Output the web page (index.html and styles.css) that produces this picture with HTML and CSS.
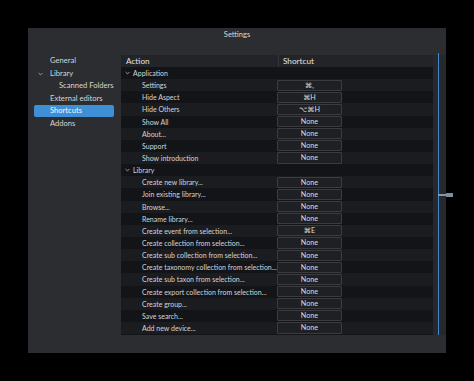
FILE: index.html
```html
<!DOCTYPE html>
<html>
<head>
<meta charset="utf-8">
<link rel="stylesheet" href="styles.css">
</head>
<body>
<div class="window">
  <div class="titlebar">Settings</div>
  <div class="content">
    <div class="sidebar">
      <div class="nav">General</div>
      <div class="nav"><svg class="nav-chev" width="5" height="4" viewBox="0 0 5 4"><path d="M0.6 1 L2.5 2.9 L4.4 1" fill="none" stroke="#b8b9bb" stroke-width="0.8"/></svg>Library</div>
      <div class="nav sub">Scanned Folders</div>
      <div class="nav">External editors</div>
      <div class="nav selected">Shortcuts</div>
      <div class="nav">Addons</div>
    </div>
    <div class="tablewrap">
      <div class="table">
        <div class="thead">
          <div class="th th-action">Action</div>
          <div class="th th-shortcut">Shortcut</div>
        </div>
        <div class="row group"><div class="cell-action"><svg class="chev" width="5" height="4" viewBox="0 0 5 4"><path d="M0.6 1 L2.5 2.9 L4.4 1" fill="none" stroke="#b8b9bb" stroke-width="0.8"/></svg>Application</div></div>
        <div class="row"><div class="cell-action">Settings</div><div class="cell-sc"><span class="key">⌘,</span></div></div>
        <div class="row"><div class="cell-action">Hide Aspect</div><div class="cell-sc"><span class="key">⌘H</span></div></div>
        <div class="row"><div class="cell-action">Hide Others</div><div class="cell-sc"><span class="key">⌥⌘H</span></div></div>
        <div class="row"><div class="cell-action">Show All</div><div class="cell-sc"><span class="key">None</span></div></div>
        <div class="row"><div class="cell-action">About...</div><div class="cell-sc"><span class="key">None</span></div></div>
        <div class="row"><div class="cell-action">Support</div><div class="cell-sc"><span class="key">None</span></div></div>
        <div class="row"><div class="cell-action">Show introduction</div><div class="cell-sc"><span class="key">None</span></div></div>
        <div class="row group"><div class="cell-action"><svg class="chev" width="5" height="4" viewBox="0 0 5 4"><path d="M0.6 1 L2.5 2.9 L4.4 1" fill="none" stroke="#b8b9bb" stroke-width="0.8"/></svg>Library</div></div>
        <div class="row"><div class="cell-action">Create new library...</div><div class="cell-sc"><span class="key">None</span></div></div>
        <div class="row"><div class="cell-action">Join existing library...</div><div class="cell-sc"><span class="key">None</span></div></div>
        <div class="row"><div class="cell-action">Browse...</div><div class="cell-sc"><span class="key">None</span></div></div>
        <div class="row"><div class="cell-action">Rename library...</div><div class="cell-sc"><span class="key">None</span></div></div>
        <div class="row"><div class="cell-action">Create event from selection...</div><div class="cell-sc"><span class="key">⌘E</span></div></div>
        <div class="row"><div class="cell-action">Create collection from selection...</div><div class="cell-sc"><span class="key">None</span></div></div>
        <div class="row"><div class="cell-action">Create sub collection from selection...</div><div class="cell-sc"><span class="key">None</span></div></div>
        <div class="row"><div class="cell-action">Create taxonomy collection from selection...</div><div class="cell-sc"><span class="key">None</span></div></div>
        <div class="row"><div class="cell-action">Create sub taxon from selection...</div><div class="cell-sc"><span class="key">None</span></div></div>
        <div class="row"><div class="cell-action">Create export collection from selection...</div><div class="cell-sc"><span class="key">None</span></div></div>
        <div class="row"><div class="cell-action">Create group...</div><div class="cell-sc"><span class="key">None</span></div></div>
        <div class="row"><div class="cell-action">Save search...</div><div class="cell-sc"><span class="key">None</span></div></div>
        <div class="row"><div class="cell-action">Add new device...</div><div class="cell-sc"><span class="key">None</span></div></div>
      </div>
      <div class="scrollcol"><div class="scrollline"></div></div>
    </div>
  </div>
  <div class="handle"><div class="handle-stem"></div><div class="handle-knob"></div></div>
</div>
</body>
</html>
```

FILE: styles.css
```css
html, body {
  margin: 0;
  padding: 0;
  background: #000;
}
body {
  width: 474px;
  height: 381px;
  overflow: hidden;
  font-family: Lato, "Noto Sans", "DejaVu Sans", sans-serif;
  color: #d6d7d9;
}
.window {
  position: relative;
  margin: 28px 0 0 28px;
  width: 418px;
  height: 325px;
  background: #2b2d30;
  display: flex;
  flex-direction: column;
}
.titlebar {
  height: 14px;
  line-height: 14px;
  text-align: center;
  font-size: 7.5px;
  color: #d8d9db;
}
.content {
  flex: 1;
  display: flex;
}
.sidebar {
  width: 93px;
  padding-top: 12px;
  display: flex;
  flex-direction: column;
}
.nav {
  position: relative;
  height: 12.7px;
  line-height: 12.7px;
  margin: 0 7px 0 6px;
  padding-left: 16px;
  font-size: 7.6px;
  color: #d4d5d7;
  border-radius: 2px;
}
.nav.sub {
  padding-left: 25px;
}
.nav.selected {
  height: 11.5px;
  line-height: 11.5px;
  margin-top: 0.6px;
  margin-bottom: 0.6px;
  background: #3f8fd6;
  color: #f4f7fb;
}
.nav-chev {
  position: absolute;
  left: 4px;
  top: 5px;
}
.tablewrap {
  display: flex;
  padding-top: 13px;
  padding-bottom: 18px;
}
.table {
  width: 312px;
  background: #131417;
  display: flex;
  flex-direction: column;
}
.thead {
  height: 12px;
  display: flex;
  background: #222427;
  font-size: 8.2px;
  color: #e2e3e5;
}
.th {
  line-height: 12px;
}
.th-action {
  width: 152px;
  padding-left: 5px;
}
.th-shortcut {
  flex: 1;
  padding-left: 4px;
  border-left: 1px solid #34363a;
}
.row {
  height: 12.15px;
  display: flex;
  align-items: center;
  font-size: 7px;
  color: #d4d5d7;
}
.row:nth-child(odd) {
  background: #1b1c1f;
}
.row:nth-child(even) {
  background: #131417;
}
.cell-action {
  width: 135px;
  padding-left: 21px;
  white-space: nowrap;
}
.row.group .cell-action {
  padding-left: 12px;
  position: relative;
}
.chev {
  position: absolute;
  left: 4px;
  top: 2px;
}
.cell-sc {
  width: 65px;
  height: 11.15px;
}
.key {
  display: block;
  box-sizing: border-box;
  height: 11.15px;
  line-height: 9.6px;
  border: 1px solid #3a3c40;
  border-radius: 1px;
  background: #1f2023;
  text-align: center;
  color: #dcdddf;
  font-size: 7.2px;
  font-family: Lato, "DejaVu Sans", sans-serif;
}
.scrollcol {
  width: 13px;
  background: #26282b;
  position: relative;
}
.scrollline {
  position: absolute;
  left: 4.5px;
  top: -2px;
  bottom: 0;
  width: 1.5px;
  background: #3f86cc;
}
.handle {
  position: absolute;
  left: 410px;
  top: 165px;
  display: flex;
  align-items: center;
  height: 4px;
}
.handle-stem {
  width: 8px;
  height: 1.5px;
  background: #8796a6;
}
.handle-knob {
  width: 7px;
  height: 4px;
  background: #7f8fa0;
  border-radius: 0.5px;
}
```
